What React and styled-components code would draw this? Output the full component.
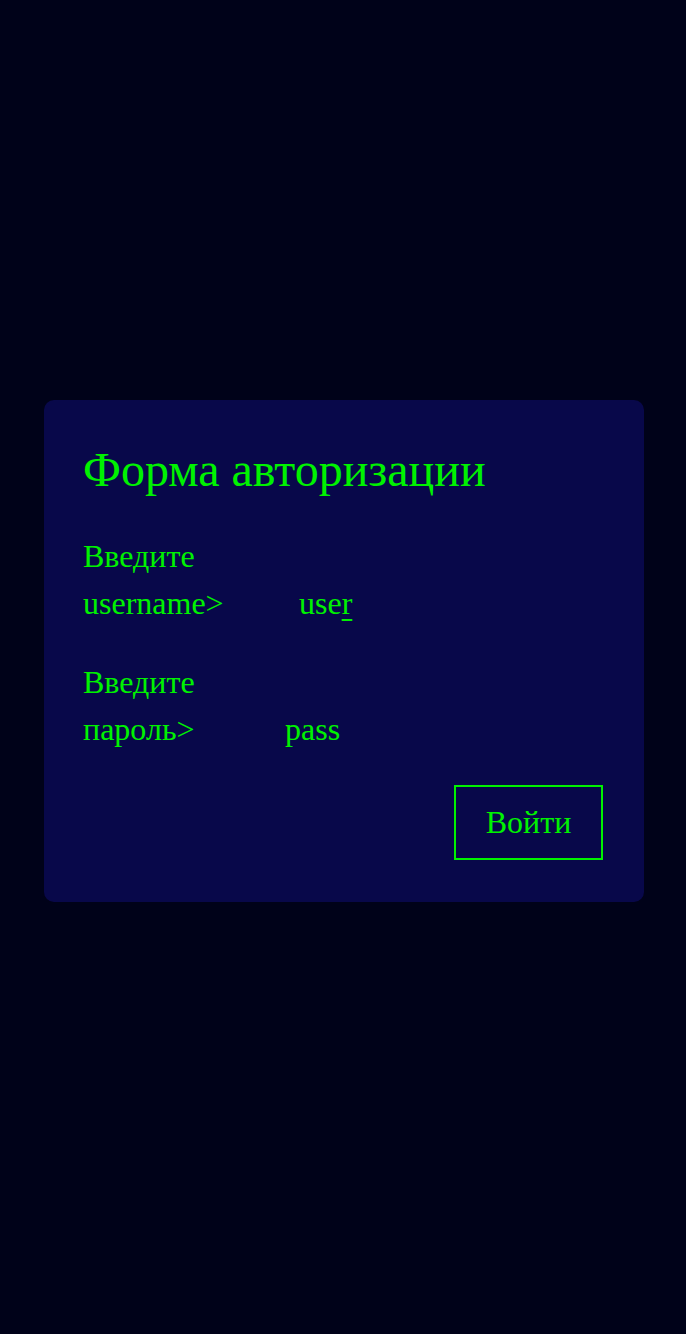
import styled, { createGlobalStyle } from "styled-components";

const GlobalStyle = createGlobalStyle`
  html, body {
    margin: 0;
    padding: 0;
    background: #000219;
  }
  body {
    font-family: "Liberation Serif", "Times New Roman", serif;
  }
`;

function App() {
  return (
    <>
      <GlobalStyle />
      <Page>
        <Card>
          <Title>Форма авторизации</Title>
          <Field>
            <Label $width={216}>Введите username&gt;</Label>
            <Value>
              use<Caret>r</Caret>
            </Value>
          </Field>
          <Field>
            <Label $width={202}>Введите пароль&gt;</Label>
            <Value>pass</Value>
          </Field>
          <Actions>
            <Button type="button">Войти</Button>
          </Actions>
        </Card>
      </Page>
    </>
  );
}

export default App;

const Page = styled.div`
  min-height: 1334px;
  padding: 400px 0 0 44px;
  box-sizing: border-box;
`;

const Card = styled.div`
  width: 600px;
  height: 502px;
  box-sizing: border-box;
  padding: 42px 41px 40px 39px;
  background: #08084a;
  border-radius: 10px;
  color: #00f200;
`;

const Title = styled.h1`
  margin: 0 0 36px;
  font-size: 48px;
  font-weight: normal;
  line-height: 55px;
`;

const Field = styled.div`
  display: flex;
  align-items: flex-start;
  font-size: 32px;
  line-height: 47px;
  margin-bottom: 32px;
`;

const Label = styled.label`
  width: ${(p) => p.$width}px;
  flex-shrink: 0;
`;

const Value = styled.div`
  margin-top: 47px;
`;

const Caret = styled.span`
  text-decoration: underline;
  text-decoration-thickness: 2px;
  text-underline-offset: 5px;
`;

const Actions = styled.div`
  display: flex;
  justify-content: flex-end;
  margin-top: 4px;
`;

const Button = styled.button`
  width: 149px;
  height: 75px;
  box-sizing: border-box;
  border: 2px solid #00f200;
  background: transparent;
  color: #00f200;
  font-family: "Liberation Serif", "Times New Roman", serif;
  font-size: 32px;
  padding: 0;
  cursor: pointer;
`;
